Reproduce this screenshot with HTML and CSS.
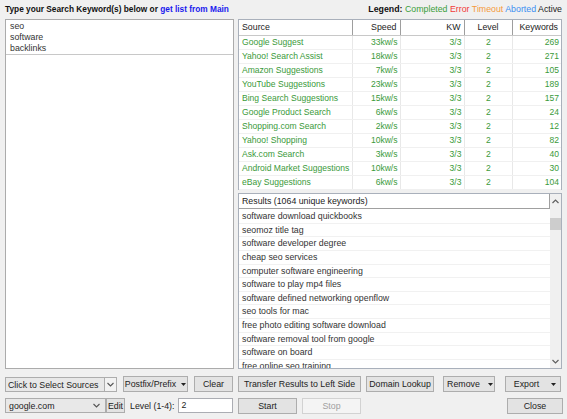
FILE: index.html
```html
<!DOCTYPE html>
<html>
<head>
<meta charset="utf-8">
<link rel="stylesheet" href="styles.css">
</head>
<body>
<div class="app">
  <header class="topbar">
    <div class="prompt">Type your Search Keyword(s) below or <span class="link">get list from Main</span></div>
    <div class="legend"><b>Legend:</b> <span class="c-ok">Completed</span> <span class="c-err">Error</span> <span class="c-to">Timeout</span> <span class="c-ab">Aborted</span> <span class="c-act">Active</span></div>
  </header>

  <div class="main">
    <div class="kwbox">
      <div class="kwlist">
        <div>seo</div>
        <div>software</div>
        <div>backlinks</div>
      </div>
    </div>

    <div class="right">
      <div class="sources">
        <table class="srctable">
          <colgroup><col class="w-src"><col class="w-spd"><col class="w-kw"><col class="w-lvl"><col class="w-cnt"></colgroup>
          <thead>
            <tr><th class="l">Source</th><th class="r">Speed</th><th class="r">KW</th><th class="c">Level</th><th class="r">Keywords</th></tr>
          </thead>
          <tbody>
            <tr><td class="l">Google Suggest</td><td class="r">33kw/s</td><td class="r">3/3</td><td class="c">2</td><td class="r">269</td></tr>
            <tr><td class="l">Yahoo! Search Assist</td><td class="r">18kw/s</td><td class="r">3/3</td><td class="c">2</td><td class="r">271</td></tr>
            <tr><td class="l">Amazon Suggestions</td><td class="r">7kw/s</td><td class="r">3/3</td><td class="c">2</td><td class="r">105</td></tr>
            <tr><td class="l">YouTube Suggestions</td><td class="r">23kw/s</td><td class="r">3/3</td><td class="c">2</td><td class="r">189</td></tr>
            <tr><td class="l">Bing Search Suggestions</td><td class="r">15kw/s</td><td class="r">3/3</td><td class="c">2</td><td class="r">157</td></tr>
            <tr><td class="l">Google Product Search</td><td class="r">6kw/s</td><td class="r">3/3</td><td class="c">2</td><td class="r">24</td></tr>
            <tr><td class="l">Shopping.com Search</td><td class="r">2kw/s</td><td class="r">3/3</td><td class="c">2</td><td class="r">12</td></tr>
            <tr><td class="l">Yahoo! Shopping</td><td class="r">10kw/s</td><td class="r">3/3</td><td class="c">2</td><td class="r">82</td></tr>
            <tr><td class="l">Ask.com Search</td><td class="r">3kw/s</td><td class="r">3/3</td><td class="c">2</td><td class="r">40</td></tr>
            <tr><td class="l">Android Market Suggestions</td><td class="r">10kw/s</td><td class="r">3/3</td><td class="c">2</td><td class="r">30</td></tr>
            <tr><td class="l">eBay Suggestions</td><td class="r">6kw/s</td><td class="r">3/3</td><td class="c">2</td><td class="r">104</td></tr>
          </tbody>
        </table>
      </div>

      <div class="results">
        <div class="reslist">
          <div class="reshead">Results (1064 unique keywords)</div>
          <div class="resrows">
            <div class="resrow">software download quickbooks</div>
            <div class="resrow">seomoz title tag</div>
            <div class="resrow">software developer degree</div>
            <div class="resrow">cheap seo services</div>
            <div class="resrow">computer software engineering</div>
            <div class="resrow">software to play mp4 files</div>
            <div class="resrow">software defined networking openflow</div>
            <div class="resrow">seo tools for mac</div>
            <div class="resrow">free photo editing software download</div>
            <div class="resrow">software removal tool from google</div>
            <div class="resrow">software on board</div>
            <div class="resrow">free online seo training</div>
          </div>
        </div>
        <div class="scrollbar">
          <div class="arrow up"><svg width="7" height="5" viewBox="0 0 7 5"><path d="M0.5 4 L3.5 1 L6.5 4" fill="none" stroke="#606060" stroke-width="1.2"/></svg></div>
          <div class="track"><div class="thumb"></div></div>
          <div class="arrow down"><svg width="7" height="5" viewBox="0 0 7 5"><path d="M0.5 1 L3.5 4 L6.5 1" fill="none" stroke="#606060" stroke-width="1.2"/></svg></div>
        </div>
      </div>
    </div>
  </div>

  <div class="ctrlrow row1">
    <div class="left-ctrls">
      <div class="combo sources-combo">
        <span class="combo-text">Click to Select Sources</span>
        <span class="combo-btn"><svg width="7" height="5" viewBox="0 0 7 5"><path d="M0.5 1 L3.5 4 L6.5 1" fill="none" stroke="#555" stroke-width="1.1"/></svg></span>
      </div>
      <button class="btn btn-postfix">Postfix/Prefix <svg class="tri" width="5" height="3" viewBox="0 0 5 3"><path d="M0 0 H5 L2.5 3 Z" fill="#222"/></svg></button>
      <button class="btn btn-clear">Clear</button>
    </div>
    <div class="right-ctrls">
      <button class="btn btn-transfer">Transfer Results to Left Side</button>
      <button class="btn btn-domain">Domain Lookup</button>
      <button class="btn btn-remove">Remove <svg class="tri" width="5" height="3" viewBox="0 0 5 3"><path d="M0 0 H5 L2.5 3 Z" fill="#222"/></svg></button>
      <button class="btn btn-export">Export <svg class="tri" width="5" height="3" viewBox="0 0 5 3"><path d="M0 0 H5 L2.5 3 Z" fill="#222"/></svg></button>
    </div>
  </div>

  <div class="ctrlrow row2">
    <div class="left-ctrls">
      <div class="combo domain-combo">
        <span class="combo-text">google.com</span>
        <svg class="combo-arrow" width="7" height="5" viewBox="0 0 7 5"><path d="M0.5 1 L3.5 4 L6.5 1" fill="none" stroke="#555" stroke-width="1.1"/></svg>
      </div>
      <button class="btn btn-edit">Edit</button>
      <label class="lvl-label">Level (1-4):</label>
      <div class="lvl-input">2</div>
    </div>
    <div class="right-ctrls">
      <button class="btn btn-start">Start</button>
      <button class="btn btn-stop" disabled>Stop</button>
      <span class="spacer"></span>
      <button class="btn btn-close">Close</button>
    </div>
  </div>
</div>
</body>
</html>
```

FILE: styles.css
```css
html, body {
  margin: 0;
  padding: 0;
}
body {
  width: 567px;
  height: 419px;
  overflow: hidden;
  background: #f0f0f0;
  font-family: "Liberation Sans", Arial, sans-serif;
  font-size: 8.8px;
  color: #222;
}
.app {
  display: flex;
  flex-direction: column;
  padding: 0 5px;
}

/* top bar */
.topbar {
  height: 19px;
  display: flex;
  justify-content: space-between;
  align-items: center;
  line-height: 19px;
}
.prompt {
  font-weight: bold;
  font-size: 8.3px;
  color: #111;
}
.link { color: #1a1aee; }
.legend { color: #222; }
.legend b { color: #111; }
.c-ok { color: #3a9e3a; }
.c-err { color: #f23a3a; }
.c-to { color: #f59a3c; }
.c-ab { color: #3b8ff0; }
.c-act { color: #222; }

/* main area */
.main {
  display: grid;
  grid-template-columns: 229px 324px;
  column-gap: 4px;
  height: 350px;
}
.kwbox {
  background: #fff;
  border: 1px solid #ababab;
}
.kwlist {
  padding: 1px 0 0 4px;
  line-height: 11px;
  color: #333;
  border-bottom: 1px solid #c8c8c8;
}
.right {
  display: flex;
  flex-direction: column;
  gap: 3px;
}

/* sources table */
.sources {
  height: 171px;
  box-sizing: border-box;
  border: 1px solid #a9b0bb;
  background: #fff;
}
.srctable {
  width: 322px;
  border-collapse: collapse;
  table-layout: fixed;
}
.w-src { width: 113px; }
.w-spd { width: 48px; }
.w-kw { width: 64px; }
.w-lvl { width: 48px; }
.w-cnt { width: 49px; }
.srctable th {
  height: 15px;
  padding: 0 3px;
  font-weight: normal;
  color: #222;
  border-right: 1px solid #9e9e9e;
  border-bottom: 1px solid #c8c8c8;
  box-sizing: border-box;
  white-space: nowrap;
}
.srctable th:last-child { border-right: none; }
.srctable td {
  height: 14px;
  padding: 0 2px 0 3px;
  font-size: 8.55px;
  color: #3a9a3a;
  border-right: 1px solid #e8e8e8;
  border-bottom: 1px solid #f0f0f0;
  box-sizing: border-box;
  white-space: nowrap;
  overflow: hidden;
}
.srctable td:last-child { border-right: none; }
.l { text-align: left; }
.r { text-align: right; }
.c { text-align: center; }

/* results */
.results {
  height: 176px;
  box-sizing: border-box;
  border: 1px solid #a9b0bb;
  background: #fff;
  display: flex;
}
.reslist {
  flex: 1;
  min-width: 0;
  display: flex;
  flex-direction: column;
}
.reshead {
  height: 15px;
  line-height: 14px;
  box-sizing: border-box;
  padding-left: 3px;
  border: 1px solid #a0a0a0;
  border-top: none;
  border-left: none;
  color: #222;
  background: #fff;
}
.resrows {
  overflow: hidden;
  flex: 1;
  padding-top: 1px;
}
.resrow {
  height: 13.65px;
  line-height: 13px;
  padding-left: 3px;
  color: #333;
  border-bottom: 1px solid #f1f1f1;
  box-sizing: border-box;
  white-space: nowrap;
}
.scrollbar {
  width: 11px;
  display: flex;
  flex-direction: column;
  background: #f0f0f0;
}
.arrow {
  height: 14px;
  display: flex;
  align-items: center;
  justify-content: center;
}
.track {
  flex: 1;
  padding-top: 10px;
}
.thumb {
  height: 12px;
  background: #cdcdcd;
}

/* controls */
.ctrlrow {
  display: grid;
  grid-template-columns: 229px 324px;
  column-gap: 5px;
  height: 16px;
}
.row1 { margin-top: 7px; }
.row2 { margin-top: 6px; height: 16px; }
.left-ctrls, .right-ctrls {
  display: flex;
  align-items: stretch;
}
.row1 .right-ctrls, .row2 .right-ctrls { margin-left: -1px; }
.btn {
  font: inherit;
  color: #222;
  background: #e3e3e3;
  border: 1px solid #adadad;
  border-radius: 0;
  padding: 0;
  margin: 0;
  height: 16px;
  display: flex;
  align-items: center;
  justify-content: center;
  gap: 6px;
  white-space: nowrap;
}
.tri { display: block; }
.combo {
  box-sizing: border-box;
  height: 15px;
  background: #e8e8e8;
  border: 1px solid #adadad;
  display: flex;
  align-items: center;
  position: relative;
}
.combo-text { padding-left: 2px; flex: 1; color: #222; }
.sources-combo { width: 112px; margin-top: 1px; }
.combo-btn {
  width: 11px;
  height: 13px;
  border-left: 1px solid #adadad;
  background: #f2f2f2;
  display: flex;
  align-items: center;
  justify-content: center;
}
.btn-postfix { width: 65px; margin-left: 6px; gap: 5px; }
.btn-clear { width: 39px; margin-left: 6px; }
.btn-transfer { width: 123px; }
.btn-domain { width: 68px; margin-left: 5px; }
.btn-remove { width: 52px; margin-left: 9px; gap: 8px; padding-left: 2px; }
.btn-export { width: 56px; margin-left: 10px; gap: 12px; padding-left: 4px; }

.domain-combo { width: 101px; }
.domain-combo .combo-text { padding-left: 3px; }
.combo-arrow { margin-right: 5px; }
.btn-edit { width: 19px; height: 15px; }
.lvl-label {
  margin-left: 5px;
  line-height: 16px;
  color: #222;
}
.lvl-input {
  margin-left: 3px;
  width: 55px;
  height: 15px;
  box-sizing: border-box;
  background: #fff;
  border: 1px solid #abadb3;
  padding-left: 3px;
  line-height: 13px;
}
.btn-start { width: 59px; }
.btn-stop {
  width: 59px;
  margin-left: 5px;
  background: #f4f4f4;
  border-color: #d2d2d2;
  color: #a0a0a0;
}
.spacer { flex: 1; }
.btn-close { width: 56px; }
```
